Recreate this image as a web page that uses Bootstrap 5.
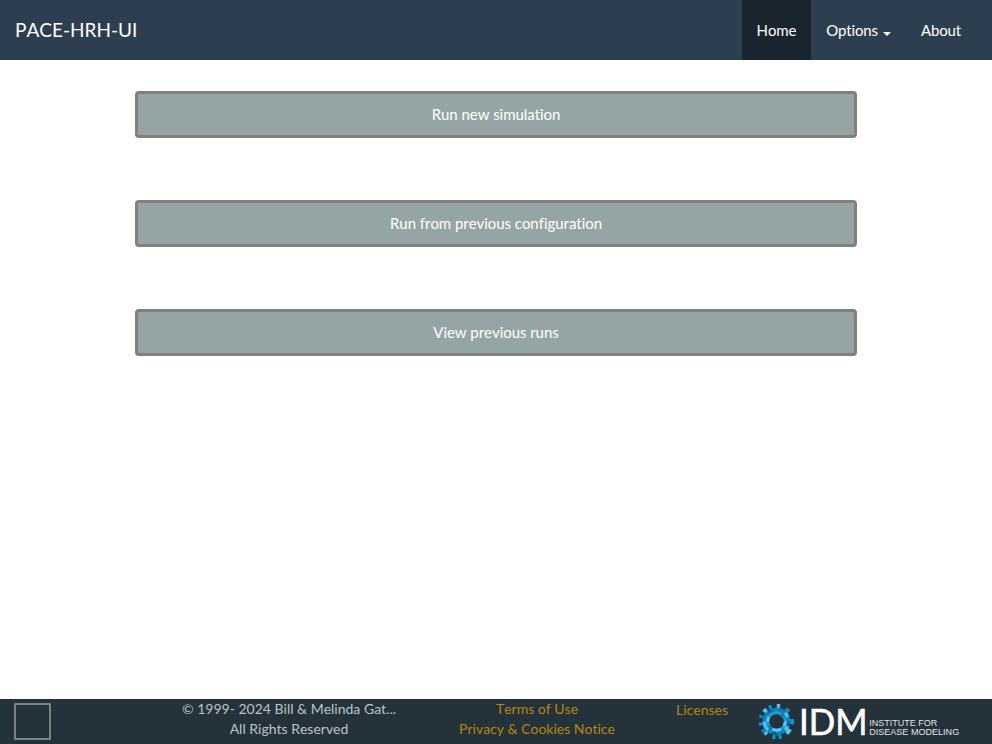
<!DOCTYPE html>
<html lang="en">
<head>
<meta charset="utf-8">
<meta name="viewport" content="width=device-width, initial-scale=1">
<title>PACE-HRH-UI</title>
<link href="https://cdn.jsdelivr.net/npm/bootstrap@5.3.0/dist/css/bootstrap.min.css" rel="stylesheet">
<style>
body,.btn-run{font-family:Lato,"Liberation Sans",sans-serif;text-rendering:optimizeSpeed;font-feature-settings:"liga" 0,"clig" 0,"kern" 0}
body{font-size:15px;line-height:21px;color:#2c3e50}
.top-bar{height:60px;background:#2c3e50}
.top-bar .navbar-brand{font-size:19px;line-height:21px;color:#fff;padding:19px 15px}
.top-bar .navbar-nav .nav-link{color:#fff;padding:20px 15px 19px;line-height:21px;letter-spacing:-.15px}
.top-bar .navbar-nav .nav-link.active{background:#1a242f;color:#fff}
.top-bar .dropdown-toggle::after{border-top:4px solid;border-left:4px solid transparent;border-right:4px solid transparent;margin-left:5px;vertical-align:middle;position:relative;top:2px}
.run-list{width:722px;margin-top:31px;gap:62px}
.btn-run{height:47px;border:3px solid #808080;border-radius:4px;background:#95a5a6;color:#fff;font-size:15px;line-height:21px;letter-spacing:-.05px}
.btn-run:hover{background:#798d8f;color:#fff;border-color:#808080}
.foot{height:45px;background:#24323b;color:#bdc3c7;font-size:14px;line-height:20px}
.foot a{color:#b8860b;text-decoration:none}
.mark-box{width:37px;height:37px;border:2px solid #7b8387;border-radius:1px;margin:4px 0 0 14px}
.col-copy{width:220px;margin-left:128px}
.col-terms{width:180px;margin-left:48px}
.col-lic{width:80px;margin-left:35px;padding-top:1px}
.logo{margin-left:13px}
</style>
<script src="https://cdn.jsdelivr.net/npm/bootstrap@5.3.0/dist/js/bootstrap.bundle.min.js"></script>
</head>
<body class="d-flex flex-column min-vh-100">
<nav class="top-bar navbar navbar-expand p-0 align-items-start">
  <a class="navbar-brand m-0" href="#">PACE-HRH-UI</a>
  <ul class="navbar-nav ms-auto pe-3">
    <li class="nav-item"><a class="nav-link active" href="#">Home</a></li>
    <li class="nav-item dropdown"><a class="nav-link dropdown-toggle" href="#" data-bs-toggle="dropdown">Options</a></li>
    <li class="nav-item"><a class="nav-link" href="#">About</a></li>
  </ul>
</nav>
<main class="run-list d-flex flex-column mx-auto flex-grow-1">
  <button class="btn btn-run">Run new simulation</button>
  <button class="btn btn-run">Run from previous configuration</button>
  <button class="btn btn-run">View previous runs</button>
</main>
<footer class="foot d-flex text-center text-nowrap">
  <div class="mark-box flex-shrink-0"></div>
  <div class="col-copy">© 1999- 2024 Bill &amp; Melinda Gat...<br>All Rights Reserved</div>
  <div class="col-terms"><a href="#">Terms of Use</a><br><a href="#">Privacy &amp; Cookies Notice</a></div>
  <div class="col-lic"><a href="#">Licenses</a></div>
  <svg class="logo flex-shrink-0" width="210" height="45" viewBox="755 699 210 45" role="img" aria-label="Institute for Disease Modeling">
    <g fill="none" transform="translate(776.5 721.5)">
      <g stroke-width="3.4">
        <circle r="9" stroke="#1f9bd0"/>
        <circle r="9" stroke="#55c8f5" pathLength="12" stroke-dasharray="1 1 2 2 1 3 1 1"/>
        <circle r="9" stroke="#087cae" pathLength="12" stroke-dasharray="0 4 1 5 1 1"/>
      </g>
      <g stroke-width="3.2">
        <circle r="12.2" stroke="#0a85b8"/>
        <circle r="12.2" stroke="#4dc3f2" pathLength="16" stroke-dasharray="0 1 1 4 2 2 1 3 1 1"/>
        <circle r="12.2" stroke="#075f85" pathLength="16" stroke-dasharray="1 3 1 5 1 5"/>
      </g>
      <g stroke-width="4">
        <path stroke="#078bc1" d="M9.2-12.7A15.7 15.7 0 0 1 12.5-9.5M-11.4 10.8A15.7 15.7 0 0 1-13.7 7.7M-15.7-3.5A15.7 15.7 0 0 1-14.7-6"/>
        <path stroke="#52c5f2" d="M13.6 7.8A15.7 15.7 0 0 1 10.1 12M-12.6-9.4A15.7 15.7 0 0 1-9.9-12.2M.3-15.7A15.7 15.7 0 0 1 3.5-15.3M-9.4 12.6A15.7 15.7 0 0 1-11.4 10.8"/>
        <path stroke="#0799d3" d="M15.5-2.5A15.7 15.7 0 0 1 15.5 2.8M5 14.9A15.7 15.7 0 0 1 2 15.6M-1 15.7A15.7 15.7 0 0 1-4 15.2M-15.4 3.8A15.7 15.7 0 0 1-15.7 1M-7.5-13.8A15.7 15.7 0 0 1-5-14.9"/>
      </g>
    </g>
    <g fill="#fff">
      <text x="799" y="734.7" font-family="Lato,sans-serif" font-size="36.5" stroke="#fff" stroke-width=".6" textLength="68.5" lengthAdjust="spacingAndGlyphs">IDM</text>
      <g font-family="'Liberation Sans',sans-serif" font-size="8.8" fill="#e2e5e7">
        <text x="869.2" y="726" textLength="68" lengthAdjust="spacingAndGlyphs">INSTITUTE FOR</text>
        <text x="869.2" y="735" textLength="90" lengthAdjust="spacingAndGlyphs">DISEASE MODELING</text>
      </g>
    </g>
  </svg>
</footer>
</body>
</html>
